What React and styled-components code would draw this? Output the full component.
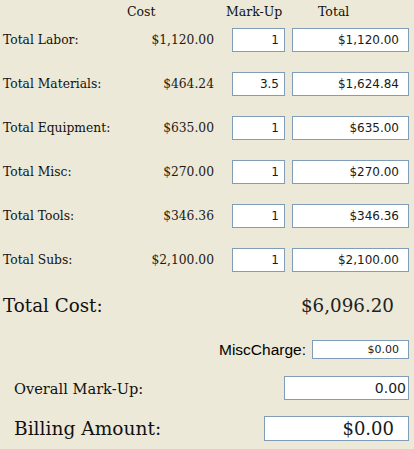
import React from "react";
import styled, { createGlobalStyle } from "styled-components";

const GlobalStyle = createGlobalStyle`
  html, body {
    margin: 0;
    padding: 0;
    background: #ece9d8;
  }
`;

const serif = `"DejaVu Serif", "Liberation Serif", serif`;
const sans = `"DejaVu Sans", Verdana, sans-serif`;

const Page = styled.div`
  width: 414px;
  height: 449px;
  box-sizing: border-box;
  padding: 0 5px 0 3px;
  background: #ece9d8;
  color: #111;
  font-family: ${serif};
  overflow: hidden;
`;

const HeaderRow = styled.div`
  display: grid;
  grid-template-columns: 124px 99px 92px auto;
  height: 23px;
  align-items: center;
  font-size: 12.5px;
  margin-bottom: 5px;
`;

const HeaderCell = styled.div`
  grid-column: ${p => p.$col};
`;

const CostGrid = styled.div`
  display: grid;
  grid-template-columns: 1fr auto 53px 117px;
  column-gap: 7px;
  row-gap: 20px;
  align-items: center;
`;

const Label = styled.div`
  font-size: 12.3px;
  white-space: nowrap;
`;

const Cost = styled.div`
  font-size: 12.3px;
  text-align: right;
  padding-right: 11px;
  color: #1f1a14;
`;

const Box = styled.div`
  box-sizing: border-box;
  height: ${p => p.$h || 24}px;
  width: ${p => (p.$w ? `${p.$w}px` : "auto")};
  background: #fff;
  border: 1px solid #7f9db9;
  display: flex;
  align-items: center;
  justify-content: flex-end;
  padding-right: ${p => p.$pr || 8}px;
  font-family: ${p => (p.$serif ? serif : sans)};
  font-size: ${p => p.$size || 12}px;
  color: #1a1a1a;
`;

const TotalRow = styled.div`
  display: flex;
  justify-content: space-between;
  align-items: center;
  height: 26px;
  margin-top: 20px;
  font-size: 18.3px;
`;

const TotalValue = styled.span`
  padding-right: 15px;
  color: #222;
`;

const MiscRow = styled.div`
  display: flex;
  justify-content: flex-end;
  align-items: center;
  gap: 6px;
  margin-top: 22px;
`;

const MiscLabel = styled.span`
  font-family: "Liberation Sans", Arial, sans-serif;
  font-size: 15.5px;
  color: #000;
`;

const SummaryRow = styled.div`
  display: flex;
  justify-content: space-between;
  align-items: center;
  padding-left: 11px;
  margin-top: ${p => p.$mt}px;
`;

const SummaryLabel = styled.span`
  font-size: ${p => p.$size}px;
  color: #111;
`;

const rows = [
  { label: "Total Labor:", cost: "$1,120.00", markup: "1", total: "$1,120.00" },
  { label: "Total Materials:", cost: "$464.24", markup: "3.5", total: "$1,624.84" },
  { label: "Total Equipment:", cost: "$635.00", markup: "1", total: "$635.00" },
  { label: "Total Misc:", cost: "$270.00", markup: "1", total: "$270.00" },
  { label: "Total Tools:", cost: "$346.36", markup: "1", total: "$346.36" },
  { label: "Total Subs:", cost: "$2,100.00", markup: "1", total: "$2,100.00" }
];

export default function App() {
  return (
    <Page>
      <GlobalStyle />
      <HeaderRow>
        <HeaderCell $col={2}>Cost</HeaderCell>
        <HeaderCell $col={3}>Mark-Up</HeaderCell>
        <HeaderCell $col={4}>Total</HeaderCell>
      </HeaderRow>
      <CostGrid>
        {rows.map(r => (
          <React.Fragment key={r.label}>
            <Label>{r.label}</Label>
            <Cost>{r.cost}</Cost>
            <Box $pr={5}>{r.markup}</Box>
            <Box $pr={9}>{r.total}</Box>
          </React.Fragment>
        ))}
      </CostGrid>
      <TotalRow>
        <span>Total Cost:</span>
        <TotalValue>$6,096.20</TotalValue>
      </TotalRow>
      <MiscRow>
        <MiscLabel>MiscCharge:</MiscLabel>
        <Box $w={97} $h={19} $size={11} $pr={9}>$0.00</Box>
      </MiscRow>
      <SummaryRow $mt={17}>
        <SummaryLabel $size={14.6}>Overall Mark-Up:</SummaryLabel>
        <Box $w={125} $h={24} $size={14} $pr={2}>0.00</Box>
      </SummaryRow>
      <SummaryRow $mt={16}>
        <SummaryLabel $size={18.6}>Billing Amount:</SummaryLabel>
        <Box $w={145} $h={25} $size={18} $pr={14} $serif>$0.00</Box>
      </SummaryRow>
    </Page>
  );
}
